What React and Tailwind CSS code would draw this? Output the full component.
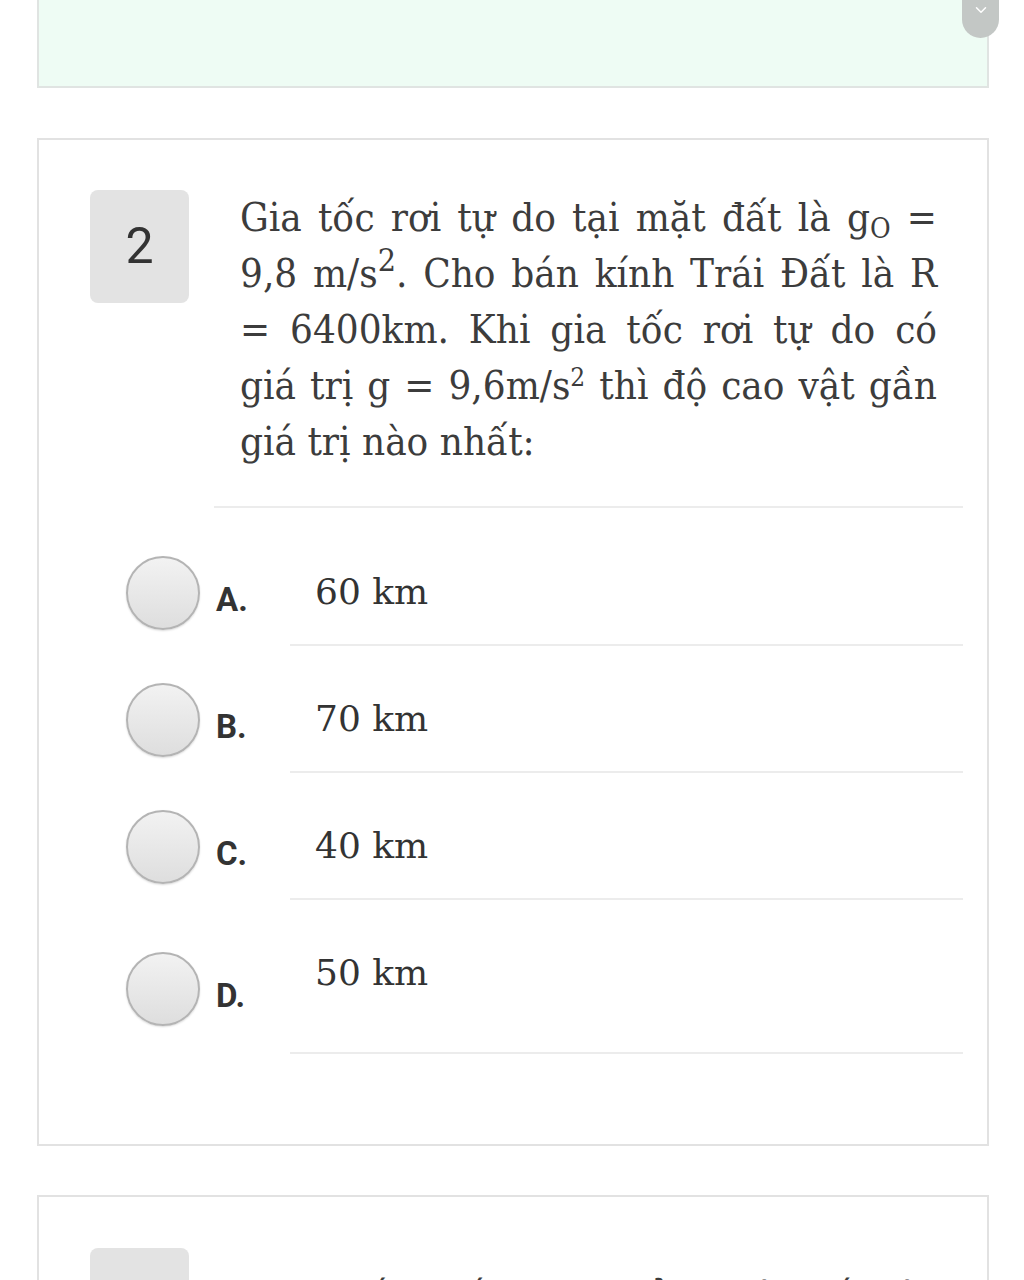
import { ChevronDown } from 'lucide-react';

const serif = "font-['DejaVu_Serif_Condensed','Liberation_Serif',serif]";

const options = [
  { key: 'A', text: '60 km', tall: false },
  { key: 'B', text: '70 km', tall: false },
  { key: 'C', text: '40 km', tall: false },
  { key: 'D', text: '50 km', tall: true },
];

const Line = ({ children, last }) => (
  <div className={last ? 'text-left' : 'text-justify [text-align-last:justify]'}>{children}</div>
);

const Option = ({ item }) => (
  <div className={`flex ${item.tall ? 'h-[154px]' : 'h-[127px]'}`}>
    <div className={`w-[164px] flex items-start ${item.tall ? 'pt-[52px]' : 'pt-[37px]'}`}>
      <div className="shrink-0 w-[74px] h-[74px] rounded-full border-2 border-[#b4b4b4] bg-linear-to-b from-[#f2f2f2] to-[#dedede] shadow-[0_1px_2px_rgba(0,0,0,0.15)]" />
      <span className="ml-[16px] mt-[20px] text-[33px] leading-[48px] font-bold text-[#333] font-['Roboto',sans-serif]">{item.key}.</span>
    </div>
    <div className="flex-1 border-b-2 border-[#ececec]">
      <p className="pl-[25px] pt-[45px] text-[36px] leading-[56px] text-[#333] font-['DejaVu_Serif',serif]">{item.text}</p>
    </div>
  </div>
);

const App = () => {
  return (
    <div className="relative min-h-screen bg-white overflow-hidden">
      {/* previous card, mostly scrolled away */}
      <div className="ml-[37px] w-[952px] h-[88px] bg-[#eefcf4] border-2 border-t-0 border-[#e0e4e2]" />

      {/* question 2 */}
      <div className="ml-[37px] w-[952px] mt-[50px] border-2 border-[#e2e2e2] pt-[50px] pb-[90px]">
        <div className="flex items-start pl-[51px]">
          <div className="w-[99px] h-[113px] rounded-[8px] bg-[#e3e3e3] flex items-center justify-center text-[50px] text-[#333] font-['Roboto',sans-serif]">
            2
          </div>
          <div className={`ml-[51px] mt-[-1px] w-[697px] text-[40px] leading-[56px] text-[#3c3c3c] ${serif}`}>
            <Line>
              Gia tốc rơi tự do tại mặt đất là g<sub className="text-[28px]">O</sub> =
            </Line>
            <Line>
              9,8 m/s<sup className="text-[32px]">2</sup>. Cho bán kính Trái Đất là R
            </Line>
            <Line>= 6400km. Khi gia tốc rơi tự do có</Line>
            <Line>
              giá trị g = 9,6m/s<sup className="text-[26px]">2</sup> thì độ cao vật gần
            </Line>
            <Line last>giá trị nào nhất:</Line>
          </div>
        </div>

        <div className="mt-[37px] ml-[175px] mr-[24px] border-t-2 border-[#ececec]" />

        <div className="pt-[11px] ml-[87px] mr-[24px]">
          {options.map((item) => (
            <Option key={item.key} item={item} />
          ))}
        </div>
      </div>

      {/* question 3, cut off by the bottom of the screen */}
      <div className="ml-[37px] w-[952px] mt-[49px] border-2 border-[#e2e2e2] pt-[51px] pb-[60px]">
        <div className="flex items-start pl-[51px]">
          <div className="w-[99px] h-[113px] rounded-[8px] bg-[#e3e3e3] flex items-center justify-center text-[50px] text-[#333] font-['Roboto',sans-serif]">
            3
          </div>
          <div className={`ml-[51px] mt-[21px] w-[697px] text-[40px] leading-[56px] text-[#3c3c3c] ${serif}`}>
            <Line>Cho biết khối lượng của Trái Đất lớn gấp 81</Line>
            <Line last>lần khối lượng Mặt Trăng.</Line>
          </div>
        </div>
      </div>

      {/* scroll button */}
      <button className="absolute left-[962px] top-0 w-[37px] h-[38px] rounded-b-full bg-[#c3c7c5] flex items-start justify-center pt-[1px]">
        <ChevronDown className="w-[18px] h-[18px] text-white" strokeWidth={2} />
      </button>
    </div>
  );
};

export default App;
